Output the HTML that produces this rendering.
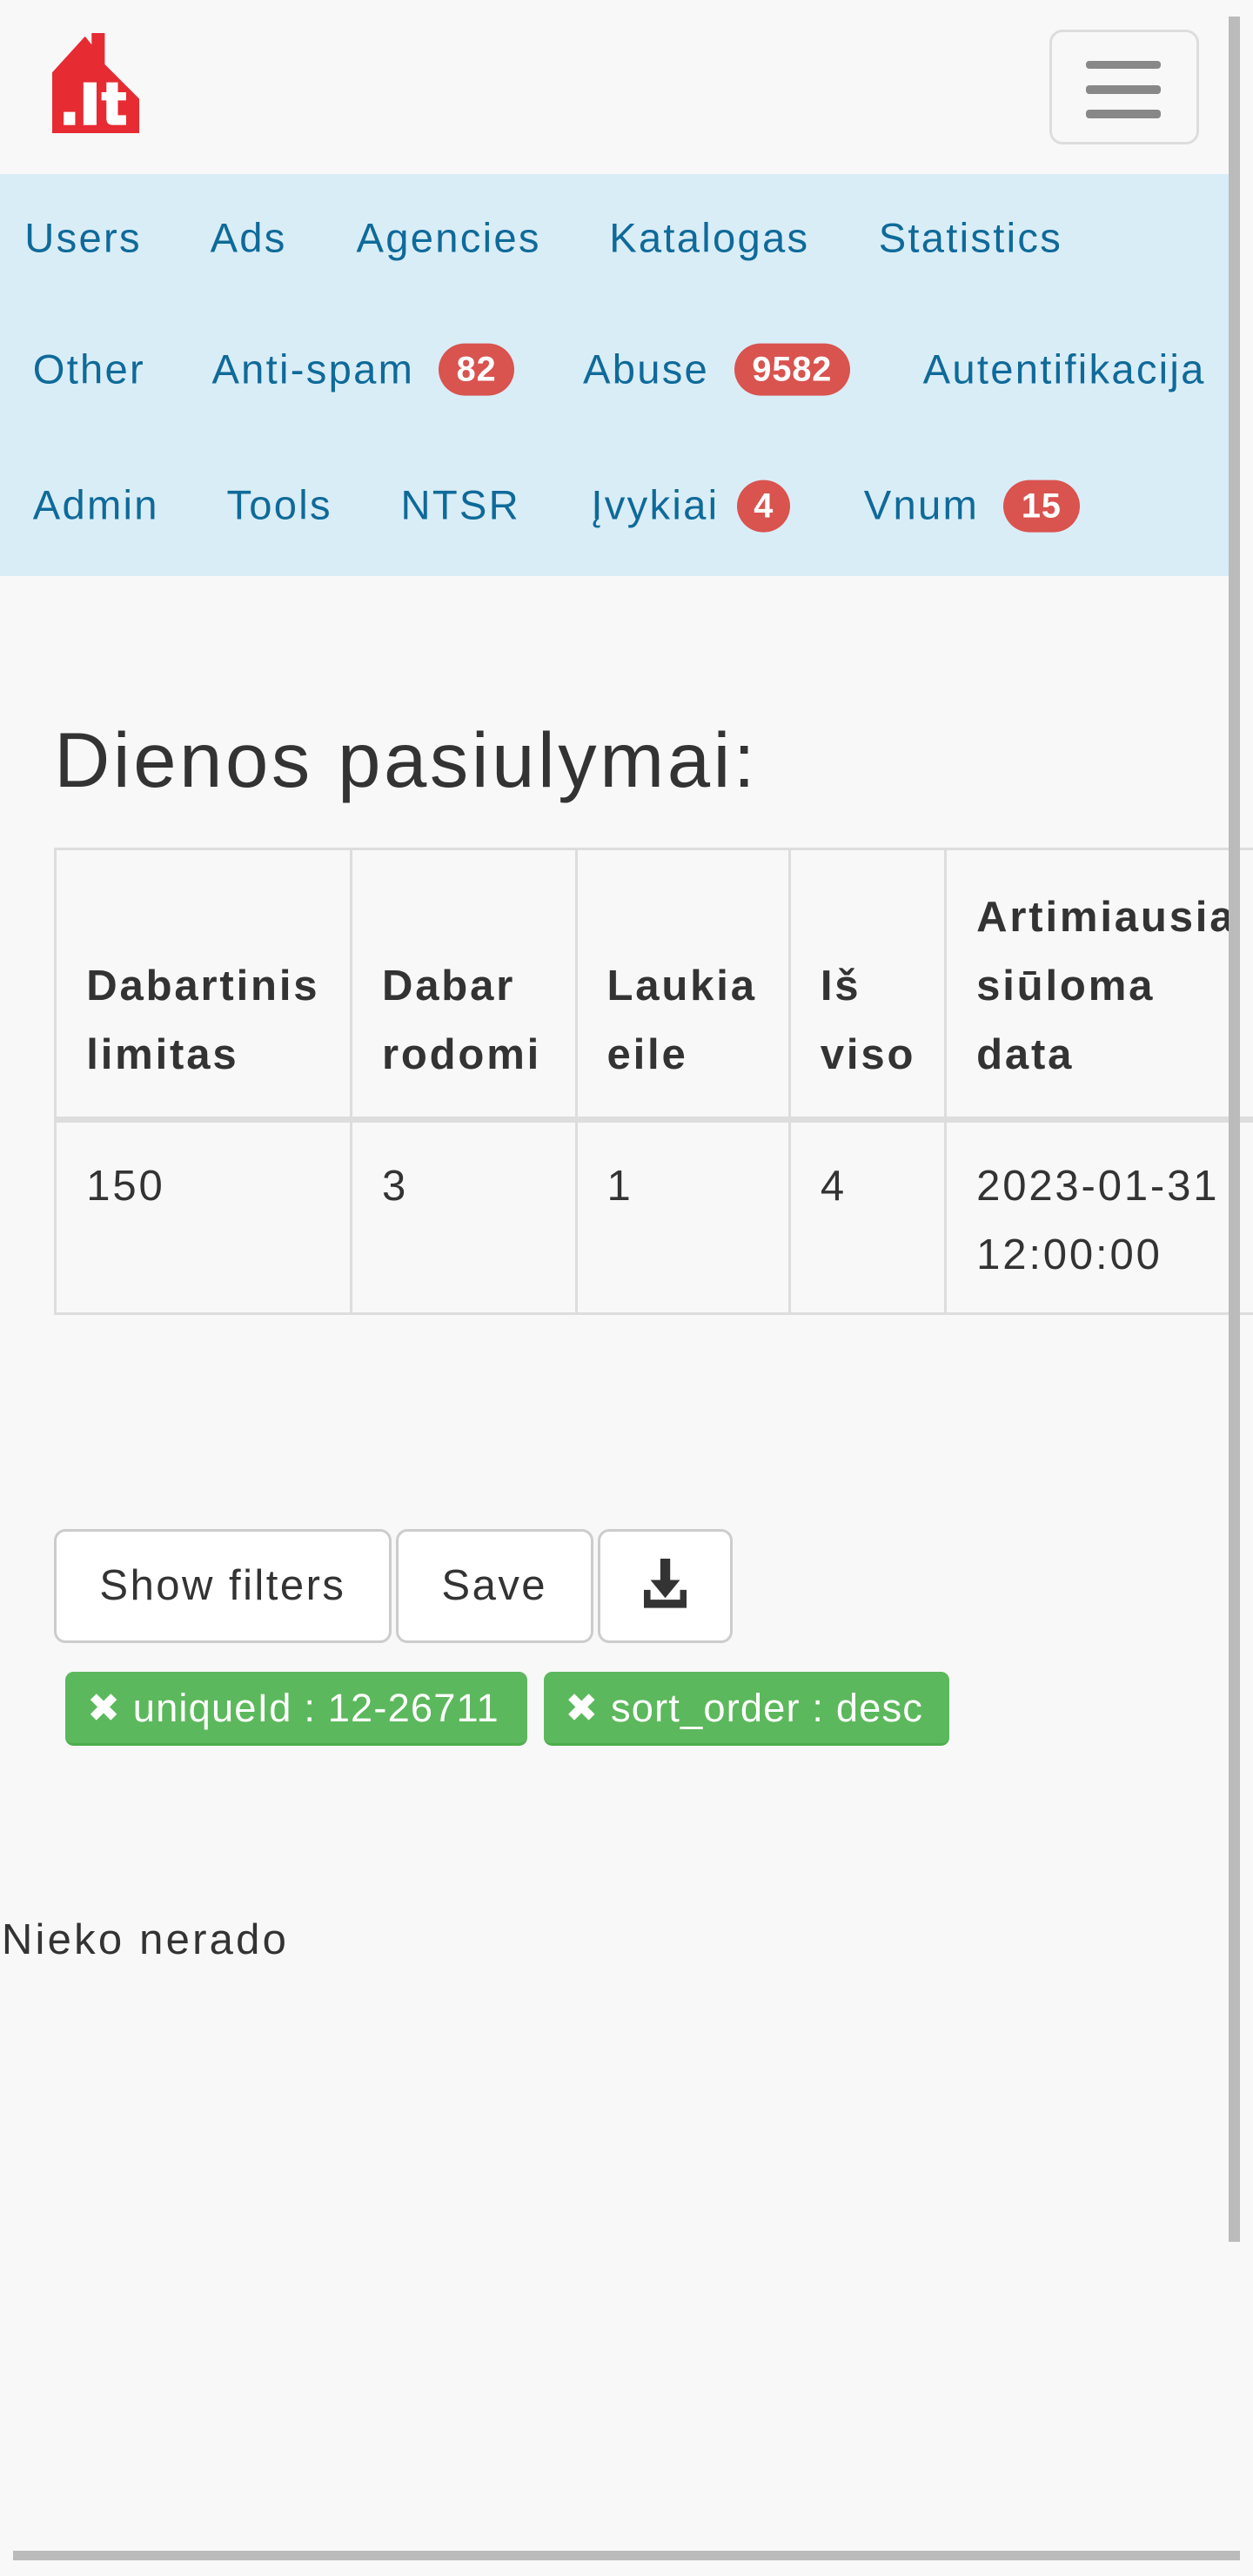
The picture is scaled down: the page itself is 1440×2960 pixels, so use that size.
<!DOCTYPE html>
<html><head><meta charset="utf-8">
<style>
html{zoom:1.8873;}
body{margin:0;width:763px;height:1568px;background:#f8f8f8;font-family:"Liberation Sans",Arial,sans-serif;color:#333;position:relative;overflow:hidden;}
.a{position:absolute;white-space:nowrap;}
.nav{position:absolute;left:0;top:106px;width:748px;height:245px;background:#d9edf7;}
.n{position:absolute;font-size:25px;letter-spacing:1.2px;color:#0f6a99;line-height:28px;transform:translateY(-14px);}
.b{display:inline-block;background:#d9534f;color:#fff;font-weight:bold;font-size:21px;letter-spacing:0.5px;border-radius:16px;height:32px;line-height:32px;padding:0 11px;vertical-align:middle;position:absolute;top:-2px;}
table{position:absolute;left:33px;top:516px;border-collapse:collapse;font-size:26px;letter-spacing:1.5px;table-layout:fixed;width:770px;}
td,th{border:2px solid #ddd;padding:20px 18px 16px;line-height:42px;text-align:left;vertical-align:bottom;overflow:hidden;white-space:nowrap;}
th{border-bottom:4px solid #ddd;}
td{vertical-align:top;padding:18px 18px 14px;}
.btn{position:absolute;top:931px;height:66px;border:2px solid #ccc;border-radius:7px;background:#fff;font-size:26px;letter-spacing:1.3px;line-height:66px;text-align:center;}
.tag{position:absolute;top:1018px;height:45px;background:#5cb85c;border-radius:5px;color:#fff;font-size:24px;letter-spacing:0.6px;line-height:45px;border-bottom:2px solid #4cae4c;box-sizing:border-box;}
</style></head><body>
<svg class="a" style="left:32px;top:20px" width="54" height="61" viewBox="0 0 54 61">
<path d="M0 24 L20 2 L24 7 L24 0 L32 0 L32 19 L53 40 L53 61 L0 61 Z" fill="#e62b33"/>
<rect x="7" y="48" width="7" height="8" fill="#fff"/>
<rect x="19" y="30" width="8" height="26" fill="#fff"/>
<path d="M33 30 h7 v6 h5 v5 h-5 v9 h5 v6 h-8 q-4 0 -4 -4 v-11 h-3 v-5 h3 z" fill="#fff"/>
</svg>
<div class="a" style="left:639px;top:18px;width:88px;height:67px;border:2px solid #ddd;border-radius:8px;box-sizing:content-box"></div>
<div class="a" style="left:661px;top:37px;width:46px;height:5px;background:#888;border-radius:2px"></div>
<div class="a" style="left:661px;top:52px;width:46px;height:5px;background:#888;border-radius:2px"></div>
<div class="a" style="left:661px;top:67px;width:46px;height:5px;background:#888;border-radius:2px"></div>
<div class="nav"></div>
<div class="n" style="left:15px;top:145px">Users</div>
<div class="n" style="left:128px;top:145px">Ads</div>
<div class="n" style="left:217px;top:145px">Agencies</div>
<div class="n" style="left:371px;top:145px">Katalogas</div>
<div class="n" style="left:535px;top:145px">Statistics</div>
<div class="n" style="left:20px;top:225px">Other</div>
<div class="n" style="left:129px;top:225px">Anti-spam<span class="b" style="left:138px">82</span></div>
<div class="n" style="left:355px;top:225px">Abuse<span class="b" style="left:92px">9582</span></div>
<div class="n" style="left:562px;top:225px">Autentifikacija</div>
<div class="n" style="left:20px;top:308px">Admin</div>
<div class="n" style="left:138px;top:308px">Tools</div>
<div class="n" style="left:244px;top:308px">NTSR</div>
<div class="n" style="left:360px;top:308px">Įvykiai<span class="b" style="left:89px;padding:0 10px">4</span></div>
<div class="n" style="left:526px;top:308px">Vnum<span class="b" style="left:85px">15</span></div>
<div class="a" style="left:33px;top:436px;font-size:47px;letter-spacing:1.9px;line-height:54px">Dienos pasiulymai:</div>
<table>
<colgroup><col style="width:180px"><col style="width:137px"><col style="width:130px"><col style="width:95px"><col style="width:228px"></colgroup>
<tr><th>Dabartinis<br>limitas</th><th>Dabar<br>rodomi</th><th>Laukia<br>eile</th><th>Iš<br>viso</th><th>Artimiausia<br>siūloma<br>data</th></tr>
<tr><td>150</td><td>3</td><td>1</td><td>4</td><td>2023-01-31<br>12:00:00</td></tr>
</table>
<div class="btn" style="left:33px;width:202px">Show filters</div>
<div class="btn" style="left:241px;width:117px">Save</div>
<div class="btn" style="left:364px;width:79px">
<svg width="26" height="30" viewBox="0 0 26 30" style="vertical-align:middle;margin-top:-6px"><path d="M10 0h6v13h6l-9 11-9-11h6z" fill="#333"/><path d="M0 19h4v6h18v-6h4v11H0z" fill="#333"/></svg></div>
<div class="tag" style="left:40px;width:281px;padding-left:13px">✖ uniqueId : 12-26711</div>
<div class="tag" style="left:331px;width:247px;padding-left:13px">✖ sort_order : desc</div>
<div class="a" style="left:1px;top:1166px;font-size:26px;letter-spacing:1.7px;line-height:30px">Nieko nerado</div>
<div class="a" style="left:748px;top:10px;width:7px;height:1355px;background:#bbb"></div>
<div class="a" style="left:8px;top:1553px;width:747px;height:6px;background:#bbb"></div>
</body></html>
